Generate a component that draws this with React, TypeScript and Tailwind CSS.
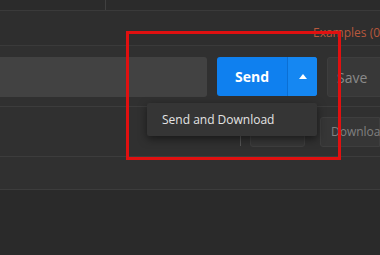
import React from 'react';

const App: React.FC = () => {
  return (
    <div
      className="relative w-[380px] h-[255px] overflow-hidden bg-[#2a2a2a] text-white"
      style={{ fontFamily: '"Open Sans", "Noto Sans", sans-serif' }}
    >
      {/* Top tab strip */}
      <div className="flex h-[11px] border-b border-[#3a3a3a] bg-[#2b2b2b]">
        <div className="w-[106px] border-r border-[#404040]" />
      </div>

      {/* Examples header */}
      <div className="flex h-[35px] items-end justify-start border-b border-[#3a3a3a] bg-[#2e2e2e] pb-[6px] pl-[313px]">
        <span className="whitespace-nowrap text-[12px] leading-none text-[#b8583c]">Examples (0)</span>
      </div>

      {/* Request row */}
      <div className="bg-[#303030]">
        <div className="flex h-[61px] items-start gap-[10px] border-b border-[#3c3c3c] pt-[11px]">
          <div className="h-[40px] w-[207px] shrink-0 rounded-r-[3px] bg-[#424242]" />
          <div className="flex h-[39px] w-[100px] shrink-0 overflow-hidden rounded-[3px] bg-[#0f80ef]">
            <button className="flex w-[70px] items-center justify-center text-[14px] font-bold text-white">
              Send
            </button>
            <div className="w-px bg-[#0b6fd4]" />
            <button className="flex flex-1 items-center justify-center bg-[#1587f2]">
              <span className="block h-0 w-0 border-x-[4px] border-b-[5px] border-x-transparent border-b-white" />
            </button>
          </div>
          <button className="h-[40px] w-[60px] shrink-0 rounded-l-[3px] border border-[#3e3e3e] bg-[#383838] pl-[9px] text-left text-[14px] text-[#8a8a8a]">
            Save
          </button>
        </div>

        {/* Second row of actions */}
        <div className="flex h-[50px] items-end border-b border-[#3c3c3c] pb-[9px]">
          <div className="ml-[240px] mb-[1px] h-[10px] w-px bg-[#555555]" />
          <div className="ml-[9px] h-[23px] w-[60px] rounded-[3px] border border-[#3e3e3e] bg-[#363636]" />
          <button className="ml-[15px] h-[30px] w-[60px] shrink-0 rounded-l-[3px] border border-[#3e3e3e] bg-[#363636] pl-[10px] text-left text-[12px] whitespace-nowrap text-[#808080]">
            Download
          </button>
        </div>

        <div className="h-[33px] border-b border-[#3c3c3c]" />
      </div>

      {/* Dropdown menu */}
      <div className="absolute left-[147px] top-[103px] flex h-[33px] w-[170px] items-center rounded-[2px] bg-[#353535] pl-[15px] shadow-[0_3px_8px_rgba(0,0,0,0.5)]">
        <span className="text-[12px] text-[#e4e4e4]">Send and Download</span>
      </div>

      {/* Highlight annotation */}
      <div className="absolute left-[126px] top-[31px] h-[129px] w-[215px] border-[3px] border-[#e01010]" />
    </div>
  );
};

export default App;
